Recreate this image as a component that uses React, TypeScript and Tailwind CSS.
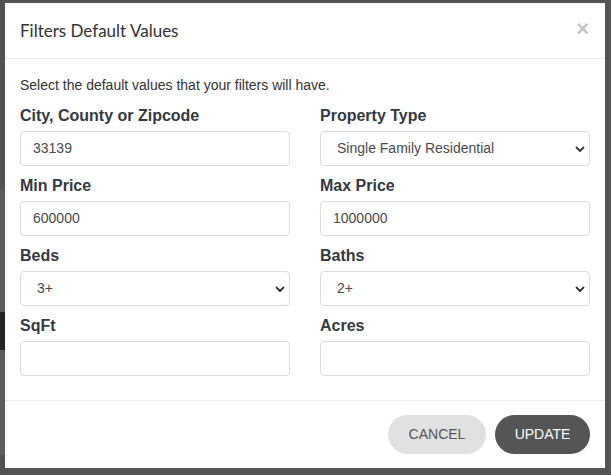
import React from "react";

const Chevron = () => (
  <svg width="12" height="12" viewBox="0 0 12 12" className="shrink-0">
    <path d="M2.5 4.5 L6 8 L9.5 4.5" fill="none" stroke="#333" strokeWidth="1.8" strokeLinecap="round" strokeLinejoin="round" />
  </svg>
);

function Field({ label, value, select }: { label: string; value?: string; select?: boolean }) {
  return (
    <div className="flex flex-col pt-[10px]">
      <div className="h-[20px] leading-[20px] mb-[5px] text-[16px] font-bold text-[#343a40]">{label}</div>
      {select ? (
        <div className="h-[35px] rounded-[4px] border border-[#dcdcdc] bg-white flex items-center pl-[16px] pr-[3px] text-[14px] text-[#4a4a4a]">
          <span className="flex-1">{value}</span>
          <Chevron />
        </div>
      ) : (
        <div className="h-[35px] rounded-[4px] border border-[#dcdcdc] bg-white flex items-center px-[12px] text-[14px] text-[#4a4a4a]">
          {value}
        </div>
      )}
    </div>
  );
}

export default function App() {
  return (
    <div className="w-[611px] h-[475px] bg-[#545454] flex overflow-hidden" style={{ fontFamily: '"Liberation Sans", Arial, sans-serif' }}>
      <div className="w-[5px] flex flex-col shrink-0">
        <div className="h-[189px] bg-[#525252]" />
        <div className="h-[123px] bg-[#5c5c5c]" />
        <div className="h-[38px] bg-[#232323]" />
        <div className="h-[105px] bg-[#5c5c5c]" />
        <div className="flex-1 bg-[#525252]" />
      </div>
      <div className="w-[600px] mt-[3px] h-[465px] bg-white flex flex-col">
        <div className="h-[56px] border-b border-[#e9ecef] flex items-center px-[15px] shrink-0">
          <div className="flex-1 text-[17px] text-[#333] pt-[1px]" style={{ fontFamily: 'Lato, "Open Sans", sans-serif' }}>
            Filters Default Values
          </div>
          <div className="text-[22px] font-bold text-[#c4c4c4] leading-none mr-[1px] -mt-[3px]">×</div>
        </div>
        <div className="px-[15px] pt-[16px] h-[342px] border-b border-[#e9ecef] shrink-0">
          <div className="h-[20px] leading-[20px] text-[14px] text-[#333] mb-[1px]">
            Select the default values that your filters will have.
          </div>
          <div className="grid grid-cols-2 gap-x-[30px]">
            <Field label="City, County or Zipcode" value="33139" />
            <Field label="Property Type" value="Single Family Residential" select />
            <Field label="Min Price" value="600000" />
            <Field label="Max Price" value="1000000" />
            <Field label="Beds" value="3+" select />
            <Field label="Baths" value="2+" select />
            <Field label="SqFt" />
            <Field label="Acres" />
          </div>
        </div>
        <div className="flex-1 flex items-center justify-end gap-[9px] px-[15px]">
          <div className="h-[39px] w-[98px] rounded-full bg-[#e1e1e1] text-[#555] text-[14px] flex items-center justify-center">CANCEL</div>
          <div className="h-[39px] w-[95px] rounded-full bg-[#555555] text-white text-[14px] flex items-center justify-center">UPDATE</div>
        </div>
      </div>
    </div>
  );
}
